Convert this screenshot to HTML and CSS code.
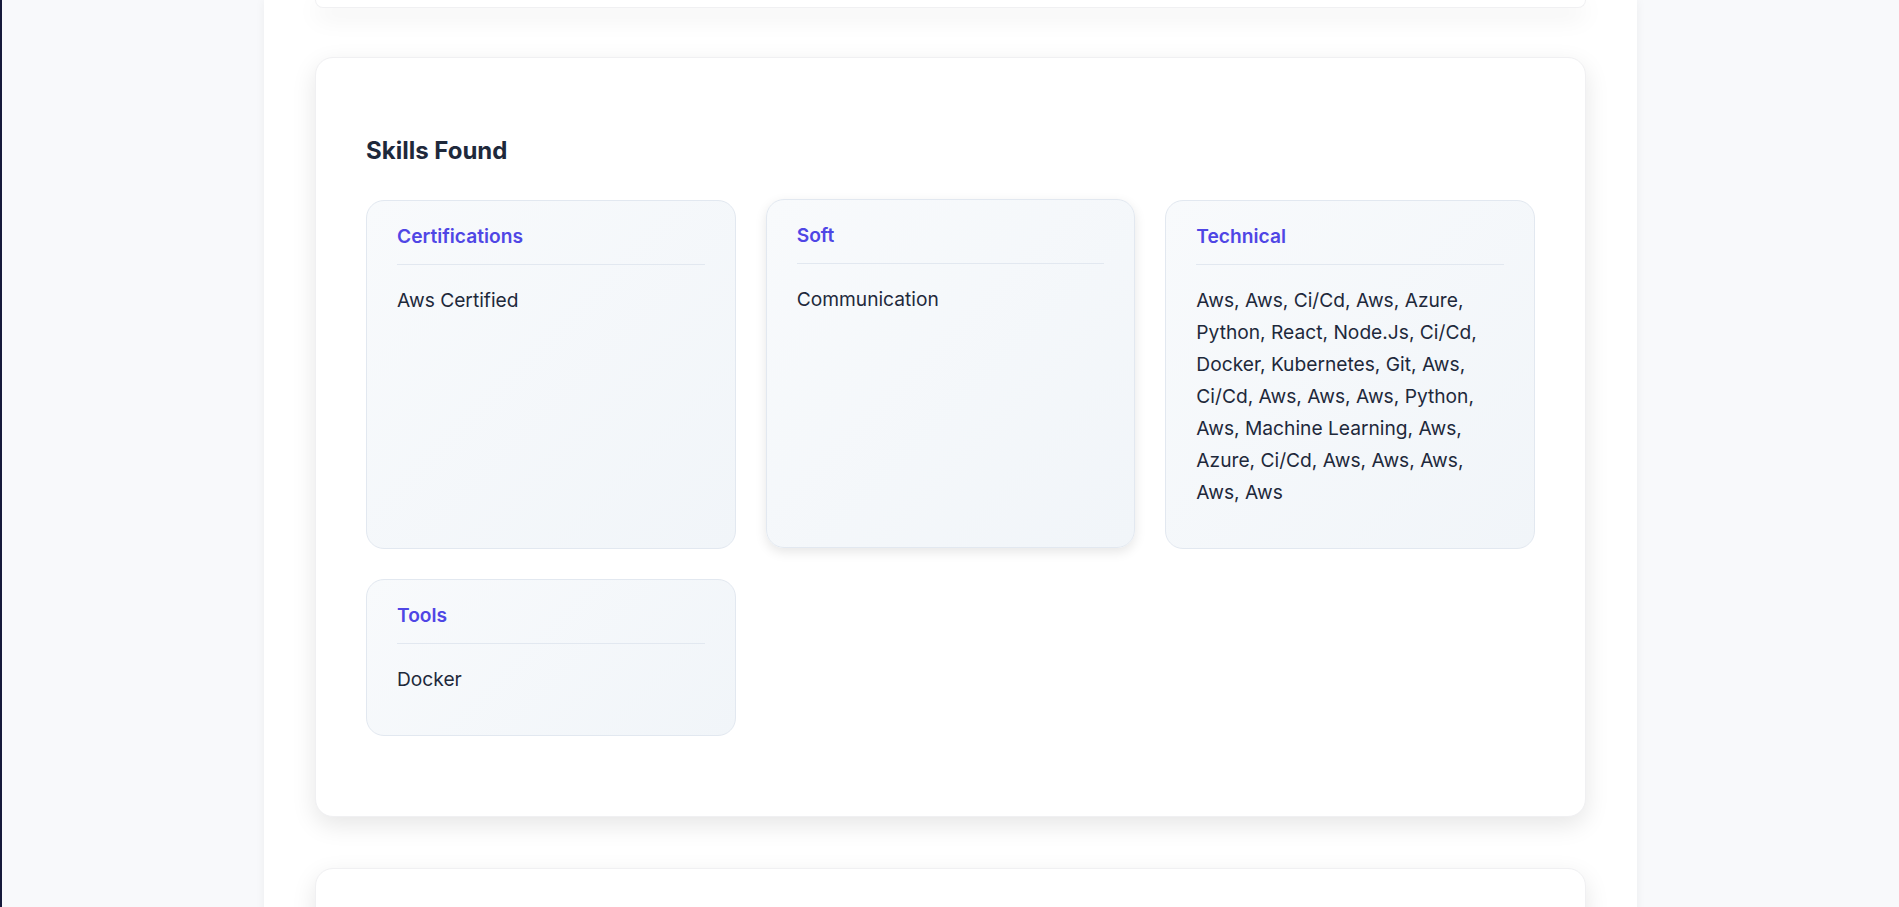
FILE: index.html
```html
<!DOCTYPE html>
<html lang="en">
<head>
<meta charset="utf-8">
<title>Skills Found</title>
<link rel="stylesheet" href="styles.css">
</head>
<body>
<div class="page">
  <main class="container">
    <section class="card card-prev"></section>

    <section class="card skills-card">
      <h2 class="section-title">Skills Found</h2>
      <div class="skills-grid">
        <div class="skill-box">
          <h3 class="skill-title">Certifications</h3>
          <p class="skill-list">Aws Certified</p>
        </div>
        <div class="skill-box is-hover">
          <h3 class="skill-title">Soft</h3>
          <p class="skill-list">Communication</p>
        </div>
        <div class="skill-box">
          <h3 class="skill-title">Technical</h3>
          <p class="skill-list">Aws, Aws, Ci/Cd, Aws, Azure, Python, React, Node.Js, Ci/Cd, Docker, Kubernetes, Git, Aws, Ci/Cd, Aws, Aws, Aws, Python, Aws, Machine Learning, Aws, Azure, Ci/Cd, Aws, Aws, Aws, Aws, Aws</p>
        </div>
        <div class="skill-box">
          <h3 class="skill-title">Tools</h3>
          <p class="skill-list">Docker</p>
        </div>
      </div>
    </section>

    <section class="card card-next"></section>
  </main>
</div>
</body>
</html>
```

FILE: styles.css
```css
* { box-sizing: border-box; }

html, body {
  margin: 0;
  padding: 0;
  height: 100%;
  overflow: hidden;
}

body {
  background: #f8f9fb;
  font-family: Inter, "Noto Sans", "Liberation Sans", sans-serif;
  color: #1e293b;
}

.page {
  min-height: 100%;
  border-left: 2px solid #161a3b;
  display: flex;
  justify-content: center;
}

.container {
  width: 1373px;
  background: #ffffff;
  box-shadow: 0 0 10px rgba(0, 0, 0, 0.05);
  padding: 0 51px;
  display: flex;
  flex-direction: column;
  gap: 49px;
}

.card {
  background: #ffffff;
  border: 1px solid #f0f0f2;
  border-radius: 18px;
  box-shadow: 0 8px 24px rgba(0, 0, 0, 0.1);
}

.card-prev {
  height: 8px;
  border-top: none;
  border-radius: 0 0 18px 18px;
  flex-shrink: 0;
}

.card-next {
  height: 200px;
  flex-shrink: 0;
  margin-top: 2px;
}

.skills-card {
  padding: 79px 50px 80px;
  flex-shrink: 0;
}

.section-title {
  margin: 0 0 34px;
  font-size: 24px;
  line-height: 1.2;
  font-weight: 650;
  color: #1e293b;
}

.skills-grid {
  display: grid;
  grid-template-columns: repeat(3, 1fr);
  gap: 30px;
}

.skill-box {
  background: linear-gradient(135deg, #f8fafc 0%, #f1f5f9 100%);
  border: 1px solid #e2e8f0;
  border-radius: 18px;
  padding: 24px 30px;
}

.skill-box.is-hover {
  transform: translateY(-1px);
  box-shadow: 0 4px 12px rgba(0, 0, 0, 0.1);
}

.skill-title {
  margin: 0 0 19px;
  padding-bottom: 16px;
  border-bottom: 1px solid #e2e8f0;
  font-size: 19.2px;
  line-height: 23px;
  font-weight: 600;
  color: #4f46e5;
}

.skill-list {
  margin: 0 0 16px;
  font-size: 19.2px;
  line-height: 32px;
  color: #1e293b;
}
```
